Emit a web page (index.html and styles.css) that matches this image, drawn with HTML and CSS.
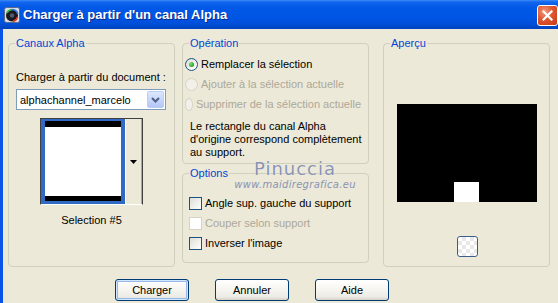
FILE: index.html
```html
<!DOCTYPE html>
<html lang="fr">
<head>
  <meta charset="UTF-8" />
  <title>Charger à partir d'un canal Alpha</title>
  <link rel="stylesheet" href="styles.css">
</head>
<body>
  <div class="window">
    <div class="titlebar">
      <svg class="app-icon" width="16" height="16" viewBox="0 0 16 16">
        <rect x="0.5" y="0.5" width="15" height="15" rx="2" fill="#d8dce4" stroke="#5a6a8a"/>
        <circle cx="8" cy="8.5" r="6" fill="#1a1a1a"/>
        <path d="M3 6 A6 6 0 0 1 8 2.5" stroke="#2fb54a" stroke-width="1.6" fill="none"/>
        <path d="M13.5 10 A6 6 0 0 1 9 14.4" stroke="#d83a2a" stroke-width="1.6" fill="none"/>
        <path d="M8 2.5 A6 6 0 0 1 13.8 7" stroke="#3a7ae0" stroke-width="1.6" fill="none"/>
        <circle cx="8" cy="8.5" r="2.2" fill="#505a70"/>
      </svg>
      <span class="title">Charger à partir d'un canal Alpha</span>
      <button class="close-btn" title="Fermer">
        <svg width="11" height="11" viewBox="0 0 11 11">
          <path d="M1.5 1.5 L9.5 9.5 M9.5 1.5 L1.5 9.5" stroke="#fff" stroke-width="2.2" stroke-linecap="square"/>
        </svg>
      </button>
    </div>

    <div class="client">
      <div class="groups">
        <fieldset class="group group-channels">
          <legend>Canaux Alpha</legend>
          <div class="doc-label">Charger à partir du document :</div>
          <div class="combo">
            <span class="combo-value">alphachannel_marcelo</span>
            <span class="combo-btn">
              <svg width="9" height="6" viewBox="0 0 9 6"><path d="M1 1 L4.5 4.5 L8 1" stroke="#4d6185" stroke-width="2" fill="none"/></svg>
            </span>
          </div>
          <div class="thumb-picker">
            <div class="thumb-item"><div class="thumb"></div></div>
            <div class="thumb-btn">
              <svg width="7" height="4" viewBox="0 0 7 4"><path d="M0 0 H7 L3.5 4 Z" fill="#000"/></svg>
            </div>
          </div>
          <div class="thumb-name">Selection #5</div>
        </fieldset>

        <div class="middle">
          <fieldset class="group group-op">
            <legend>Opération</legend>
            <div class="radio-list">
              <div class="radio-row"><span class="radio checked"></span>Remplacer la sélection</div>
              <div class="radio-row disabled"><span class="radio"></span>Ajouter à la sélection actuelle</div>
              <div class="radio-row disabled"><span class="radio"></span>Supprimer de la sélection actuelle</div>
            </div>
            <p class="op-note">Le rectangle du canal Alpha<br>d'origine correspond complètement<br>au support.</p>
          </fieldset>

          <fieldset class="group group-options">
            <legend>Options</legend>
            <div class="check-list">
              <div class="check-row"><span class="check"></span>Angle sup. gauche du support</div>
              <div class="check-row disabled"><span class="check"></span>Couper selon support</div>
              <div class="check-row"><span class="check"></span>Inverser l'image</div>
            </div>
          </fieldset>
        </div>

        <fieldset class="group group-preview">
          <legend>Aperçu</legend>
          <div class="preview"><div class="preview-sel"></div></div>
          <button class="bg-btn" title="Arrière-plan"></button>
        </fieldset>
      </div>

      <div class="buttons">
        <button class="xp-btn default">Charger</button>
        <button class="xp-btn">Annuler</button>
        <button class="xp-btn">Aide</button>
      </div>
    </div>

    <div class="watermark">
      <div class="wm-name">Pinuccia</div>
      <div class="wm-site">www.maidiregrafica.eu</div>
    </div>
  </div>
</body>
</html>
```

FILE: styles.css
```css
* {
  box-sizing: border-box;
  margin: 0;
  padding: 0;
}
html, body {
  width: 558px;
  height: 303px;
  overflow: hidden;
  background: #ECE9D8;
  font-family: "Liberation Sans", Arial, sans-serif;
  font-size: 11px;
  color: #000;
}

.window {
  position: relative;
  width: 558px;
  height: 303px;
  display: flex;
  flex-direction: column;
}

/* title bar */
.titlebar {
  display: flex;
  align-items: center;
  height: 29px;
  padding-left: 4px;
  background: linear-gradient(180deg, #3d8cf5 0, #1366ee 2px, #0058e6 8px, #0055e5 18px, #004fd8 24px, #0042bd 29px);
}
.app-icon {
  flex: none;
  margin-top: 1px;
}
.title {
  flex: 1;
  margin-left: 3px;
  font-size: 13px;
  font-weight: bold;
  color: #fff;
  text-shadow: 1px 1px 0 #0a2a8a;
}
.close-btn {
  width: 21px;
  height: 21px;
  margin-top: 1px;
  display: flex;
  align-items: center;
  justify-content: center;
  border: 1px solid #fff;
  border-radius: 3px;
  background: radial-gradient(circle at 35% 30%, #f09a80 0, #e0562f 45%, #c43a16 100%);
}

/* client area */
.client {
  flex: 1;
  border-left: 3px solid #0a55e8;
  padding: 8px 0 0 5px;
}
.groups {
  display: flex;
  align-items: flex-start;
}
.middle {
  display: flex;
  flex-direction: column;
  margin-left: 7px;
}

.group {
  border: 1px solid #D0D0BF;
  border-radius: 4px;
  padding: 0 7px;
  min-width: 0;
}
.group legend {
  color: #0046D5;
  line-height: 13px;
  padding: 0 1px;
  margin-left: -1px;
}

/* Canaux Alpha */
.group-channels {
  width: 167px;
  height: 230px;
}
.doc-label {
  margin-top: 21px;
  line-height: 13px;
  white-space: nowrap;
}
.combo {
  display: flex;
  align-items: center;
  width: 150px;
  height: 21px;
  margin-top: 5px;
  border: 1px solid #7F9DB9;
  background: #fff;
  padding: 1px 1px 1px 3px;
}
.combo-value {
  flex: 1;
  white-space: nowrap;
}
.combo-btn {
  width: 17px;
  height: 17px;
  display: flex;
  align-items: center;
  justify-content: center;
  border: 1px solid #B9CDF7;
  border-radius: 2px;
  background: linear-gradient(180deg, #dde8fd 0, #c3d4fb 60%, #b3c6f4 100%);
}
.thumb-picker {
  display: flex;
  width: 103px;
  height: 87px;
  margin: 8px auto 0;
  border: 1px solid;
  border-color: #404040 #404040 #fff #404040;
  background: #fff;
}
.thumb-item {
  width: 84px;
  border: 4px solid #316AC5;
  border-top-width: 2px;
  border-bottom-width: 3px;
  background: #316AC5;
}
.thumb {
  height: 100%;
  background: #fff;
  border-top: 6px solid #000;
  border-bottom: 5px solid #000;
}
.thumb-btn {
  flex: 1;
  display: flex;
  align-items: center;
  justify-content: center;
  background: #ECE9D8;
  border-left: 1px solid #fff;
  border-right: 1px solid #ACA899;
}
.thumb-name {
  margin-top: 9px;
  line-height: 13px;
  text-align: center;
}

/* Operation */
.group-op {
  width: 187px;
  height: 127px;
}
.radio-list {
  margin: 4px 0 0 -5px;
}
.radio-row,
.check-row {
  display: flex;
  align-items: center;
  height: 20px;
  white-space: nowrap;
}
.radio-row.disabled,
.check-row.disabled {
  color: #ACA899;
}
.radio {
  width: 13px;
  height: 13px;
  margin-right: 3px;
  border: 1px solid #1C5180;
  border-radius: 50%;
  background: linear-gradient(135deg, #dcd9cf 0, #f4f3ee 60%, #fff 100%);
  display: flex;
  align-items: center;
  justify-content: center;
}
.radio.checked::after {
  content: "";
  width: 5px;
  height: 5px;
  border-radius: 50%;
  background: radial-gradient(circle at 35% 35%, #7fe07f 0, #21a121 70%);
}
.radio-row.disabled .radio {
  border-color: #D6D3C6;
  background: #F2F0E8;
}
.op-note {
  margin-top: 6px;
  line-height: 13px;
  white-space: nowrap;
}

/* Options */
.group-options {
  width: 187px;
  height: 96px;
  margin-top: 3px;
}
.check-list {
  margin: 13px 0 0 -1px;
}
.check {
  width: 13px;
  height: 13px;
  margin-right: 3px;
  border: 1px solid #1C5180;
  background: linear-gradient(135deg, #dcdcd7 0, #f2f2ef 60%, #fff 100%);
}
.check-row.disabled .check {
  border-color: #D6D3C6;
  background: #fff;
}

/* Apercu */
.group-preview {
  width: 167px;
  height: 230px;
  margin-left: 14px;
}
.preview {
  display: flex;
  align-items: flex-end;
  justify-content: center;
  width: 140px;
  height: 98px;
  margin: 54px auto 0;
  background: #000;
}
.preview-sel {
  width: 25px;
  height: 20px;
  background: #fff;
}
.bg-btn {
  display: block;
  width: 21px;
  height: 21px;
  margin: 34px 0 0 66px;
  border: 1px solid #3c5e8c;
  border-radius: 3px;
  background-color: #fff;
  background-image: conic-gradient(#e8e8e8 25%, #fff 0 50%, #e8e8e8 0 75%, #fff 0);
  background-size: 8px 8px;
}

/* bottom buttons */
.buttons {
  display: flex;
  gap: 26px;
  margin-top: 12px;
  padding-left: 107px;
}
.xp-btn {
  width: 74px;
  height: 22px;
  font-family: "Liberation Sans", Arial, sans-serif;
  font-size: 11px;
  color: #000;
  border: 1px solid #003C74;
  border-radius: 3px;
  background: linear-gradient(180deg, #fff 0, #f5f4ef 50%, #ecebe4 85%, #d6d0c5 100%);
}
.xp-btn.default {
  box-shadow: inset 0 0 0 1px #cee7ff, inset 0 0 0 2px #98b8ea;
}

/* watermark over the dialog */
.watermark {
  position: absolute;
  left: 233px;
  top: 159px;
  width: 124px;
  text-align: center;
  color: #8a93b2;
  pointer-events: none;
}
.wm-name {
  font-family: "DejaVu Sans", Verdana, sans-serif;
  font-size: 18px;
  line-height: 20px;
  letter-spacing: 1px;
  text-shadow: 0 0 1px #fff;
}
.wm-site {
  font-family: "DejaVu Sans", Verdana, sans-serif;
  font-size: 10px;
  font-style: italic;
  line-height: 11px;
  letter-spacing: 0.3px;
}
```
